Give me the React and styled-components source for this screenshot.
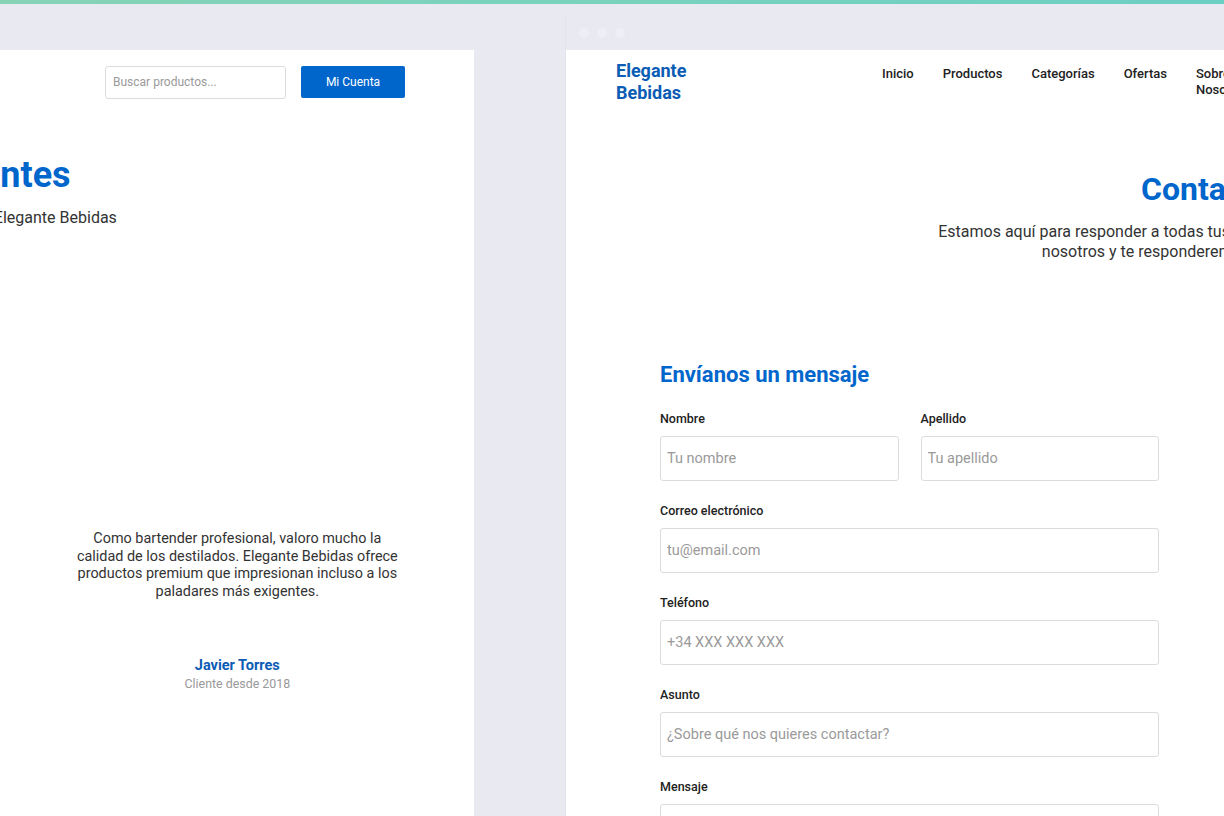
import React from 'react';
import styled, { createGlobalStyle } from 'styled-components';

const GlobalStyle = createGlobalStyle`
  * { box-sizing: border-box; }
  html, body {
    margin: 0;
    padding: 0;
    background: #e8e9f1;
    font-family: Roboto, "Noto Sans", Arial, sans-serif;
    overflow: hidden;
  }
`;

const navItems = ['Inicio', 'Productos', 'Categorías', 'Ofertas', 'Sobre Nosotros', 'Contacto'];

const testimonials = [
  {
    text: 'Llevo años comprando vinos aquí y nunca me han decepcionado. La selección es excelente y el servicio al cliente es impecable.',
    name: 'María González',
    since: 'Cliente desde 2016',
  },
  {
    text: 'Los envíos son rapidísimos y el embalaje es perfecto. Mis botellas siempre llegan en perfectas condiciones y a tiempo.',
    name: 'Carlos Martínez',
    since: 'Cliente desde 2019',
  },
  {
    text: 'Como bartender profesional, valoro mucho la calidad de los destilados. Elegante Bebidas ofrece productos premium que impresionan incluso a los paladares más exigentes.',
    name: 'Javier Torres',
    since: 'Cliente desde 2018',
  },
];

function SiteHeader() {
  return (
    <Header>
      <Logo>Elegante Bebidas</Logo>
      <Nav>
        {navItems.map(item => (
          <NavLink key={item}>{item}</NavLink>
        ))}
      </Nav>
      <Actions>
        <Search placeholder="Buscar productos..." />
        <AccountButton>Mi Cuenta</AccountButton>
      </Actions>
    </Header>
  );
}

function Chrome() {
  return (
    <TitleBar>
      <Dot />
      <Dot />
      <Dot />
    </TitleBar>
  );
}

export default function App() {
  return (
    <>
      <GlobalStyle />
      <Stage>
        <Accent />
        <Desk>
          <Window $width={1300}>
            <Chrome />
            <Page>
              <SiteHeader />
              <Hero $top={40}>
                <Title $size={36}>Lo que dicen nuestros clientes</Title>
                <Lead $nowrap $gap={12}>
                  Descubre lo que opinan quienes ya disfrutan de los productos de Elegante Bebidas
                </Lead>
              </Hero>
              <Testimonials>
                {testimonials.map(t => (
                  <Testimonial key={t.name}>
                    <Quote>{t.text}</Quote>
                    <Author>{t.name}</Author>
                    <Since>{t.since}</Since>
                  </Testimonial>
                ))}
              </Testimonials>
            </Page>
          </Window>

          <Window $width={1280}>
            <Chrome />
            <Page>
              <SiteHeader />
              <Hero $top={56}>
                <Title $size={32}>Contacto</Title>
                <Lead $gap={14}>
                  Estamos aquí para responder a todas tus preguntas. Ponte en contacto con nosotros y te responderemos lo antes posible.
                </Lead>
              </Hero>
              <ContactGrid>
                <FormCard>
                  <FormTitle>Envíanos un mensaje</FormTitle>
                  <Row>
                    <Field>
                      <Label>Nombre</Label>
                      <Input placeholder="Tu nombre" />
                    </Field>
                    <Field>
                      <Label>Apellido</Label>
                      <Input placeholder="Tu apellido" />
                    </Field>
                  </Row>
                  <Field>
                    <Label>Correo electrónico</Label>
                    <Input placeholder="tu@email.com" />
                  </Field>
                  <Field>
                    <Label>Teléfono</Label>
                    <Input placeholder="+34 XXX XXX XXX" />
                  </Field>
                  <Field>
                    <Label>Asunto</Label>
                    <Input placeholder="¿Sobre qué nos quieres contactar?" />
                  </Field>
                  <Field>
                    <Label>Mensaje</Label>
                    <TextArea placeholder="Escribe tu mensaje aquí..." />
                  </Field>
                </FormCard>
                <FormCard>
                  <FormTitle>Información de contacto</FormTitle>
                </FormCard>
              </ContactGrid>
            </Page>
          </Window>
        </Desk>
      </Stage>
    </>
  );
}

const Stage = styled.div`
  width: 1224px;
  height: 816px;
  overflow: hidden;
  display: flex;
  flex-direction: column;
`;

const Accent = styled.div`
  height: 4px;
  flex: none;
  background: linear-gradient(90deg, #86d3b6 0%, #78d2bd 50%, #6ccfc4 100%);
`;

const Desk = styled.div`
  flex: 1;
  display: flex;
  gap: 92px;
  margin-left: -826px;
  padding-top: 12px;
  min-height: 0;
`;

const Window = styled.div`
  flex: none;
  width: ${p => p.$width}px;
  display: flex;
  flex-direction: column;
  box-shadow: -1px 0 0 #e1e2ea;
`;

const TitleBar = styled.div`
  height: 34px;
  flex: none;
  display: flex;
  align-items: center;
  gap: 8px;
  padding-left: 13px;
  background: #e8e9f1;
`;

const Dot = styled.span`
  width: 10px;
  height: 10px;
  border-radius: 50%;
  background: #eeeff4;
`;

const Page = styled.div`
  flex: 1;
  background: #fff;
  overflow: hidden;
`;

const Header = styled.header`
  display: flex;
  align-items: center;
  gap: 30px;
  padding: 10px 69px 10px 50px;
`;

const Logo = styled.div`
  flex: 0 0 236px;
  padding-right: 150px;
  color: #0b5cb5;
  font-size: 18px;
  font-weight: 700;
  line-height: 22px;
`;

const Nav = styled.nav`
  display: flex;
  gap: 29px;
`;

const NavLink = styled.a`
  max-width: 70px;
  color: #222;
  font-size: 13px;
  font-weight: 500;
  line-height: 16px;
  cursor: pointer;
`;

const Actions = styled.div`
  margin-left: auto;
  display: flex;
  align-items: center;
  gap: 15px;
`;

const Search = styled.input`
  width: 181px;
  height: 33px;
  padding: 0 7px;
  border: 1px solid #dcdcdc;
  border-radius: 3px;
  font-family: inherit;
  font-size: 12px;
  outline: none;
  &::placeholder { color: #9a9a9a; }
`;

const AccountButton = styled.button`
  width: 104px;
  height: 32px;
  border: none;
  border-radius: 2px;
  background: #0066cc;
  color: #fff;
  font-family: inherit;
  font-size: 12px;
  cursor: pointer;
`;

const Hero = styled.section`
  padding: ${p => p.$top}px 50px 0;
  text-align: center;
`;

const Title = styled.h1`
  margin: 0;
  color: #0066cc;
  font-size: ${p => p.$size}px;
  font-weight: 700;
  line-height: ${p => p.$size + 6}px;
`;

const Lead = styled.p`
  margin: ${p => p.$gap}px auto 0;
  max-width: ${p => (p.$nowrap ? 'none' : '600px')};
  white-space: ${p => (p.$nowrap ? 'nowrap' : 'normal')};
  color: #333;
  font-size: 16px;
  line-height: 20px;
`;

const Testimonials = styled.div`
  display: grid;
  grid-template-columns: repeat(3, 1fr);
  gap: 40px;
  padding: 0 50px;
  margin-top: 302px;
`;

const Testimonial = styled.div`
  padding: 0 22px;
  text-align: center;
`;

const Quote = styled.p`
  margin: 0;
  color: #333;
  font-size: 14.4px;
  line-height: 17.6px;
`;

const Author = styled.div`
  margin-top: 57px;
  color: #0b5cb5;
  font-size: 14.5px;
  font-weight: 700;
  line-height: 18px;
`;

const Since = styled.div`
  color: #999;
  font-size: 12.4px;
  line-height: 18px;
`;

const ContactGrid = styled.div`
  display: grid;
  grid-template-columns: 587px 1fr;
  gap: 26px;
  padding: 56px 50px 0;
`;

const FormCard = styled.div`
  padding: 44px;
`;

const FormTitle = styled.h2`
  margin: 0 0 23px;
  color: #0066cc;
  font-size: 22px;
  font-weight: 700;
  line-height: 26px;
`;

const Row = styled.div`
  display: grid;
  grid-template-columns: 1fr 1fr;
  gap: 22px;
`;

const Field = styled.div`
  margin-bottom: 22px;
`;

const Label = styled.label`
  display: block;
  margin-bottom: 9px;
  color: #222;
  font-size: 12.5px;
  font-weight: 500;
  line-height: 16px;
`;

const Input = styled.input`
  display: block;
  width: 100%;
  height: 45px;
  padding: 0 6px;
  border: 1px solid #dcdcdc;
  border-radius: 3px;
  font-family: inherit;
  font-size: 14.5px;
  color: #333;
  outline: none;
  &::placeholder { color: #9a9a9a; }
`;

const TextArea = styled.textarea`
  display: block;
  width: 100%;
  height: 140px;
  padding: 12px 6px;
  border: 1px solid #dcdcdc;
  border-radius: 3px;
  font-family: inherit;
  font-size: 14.5px;
  resize: none;
  outline: none;
  &::placeholder { color: #9a9a9a; }
`;
